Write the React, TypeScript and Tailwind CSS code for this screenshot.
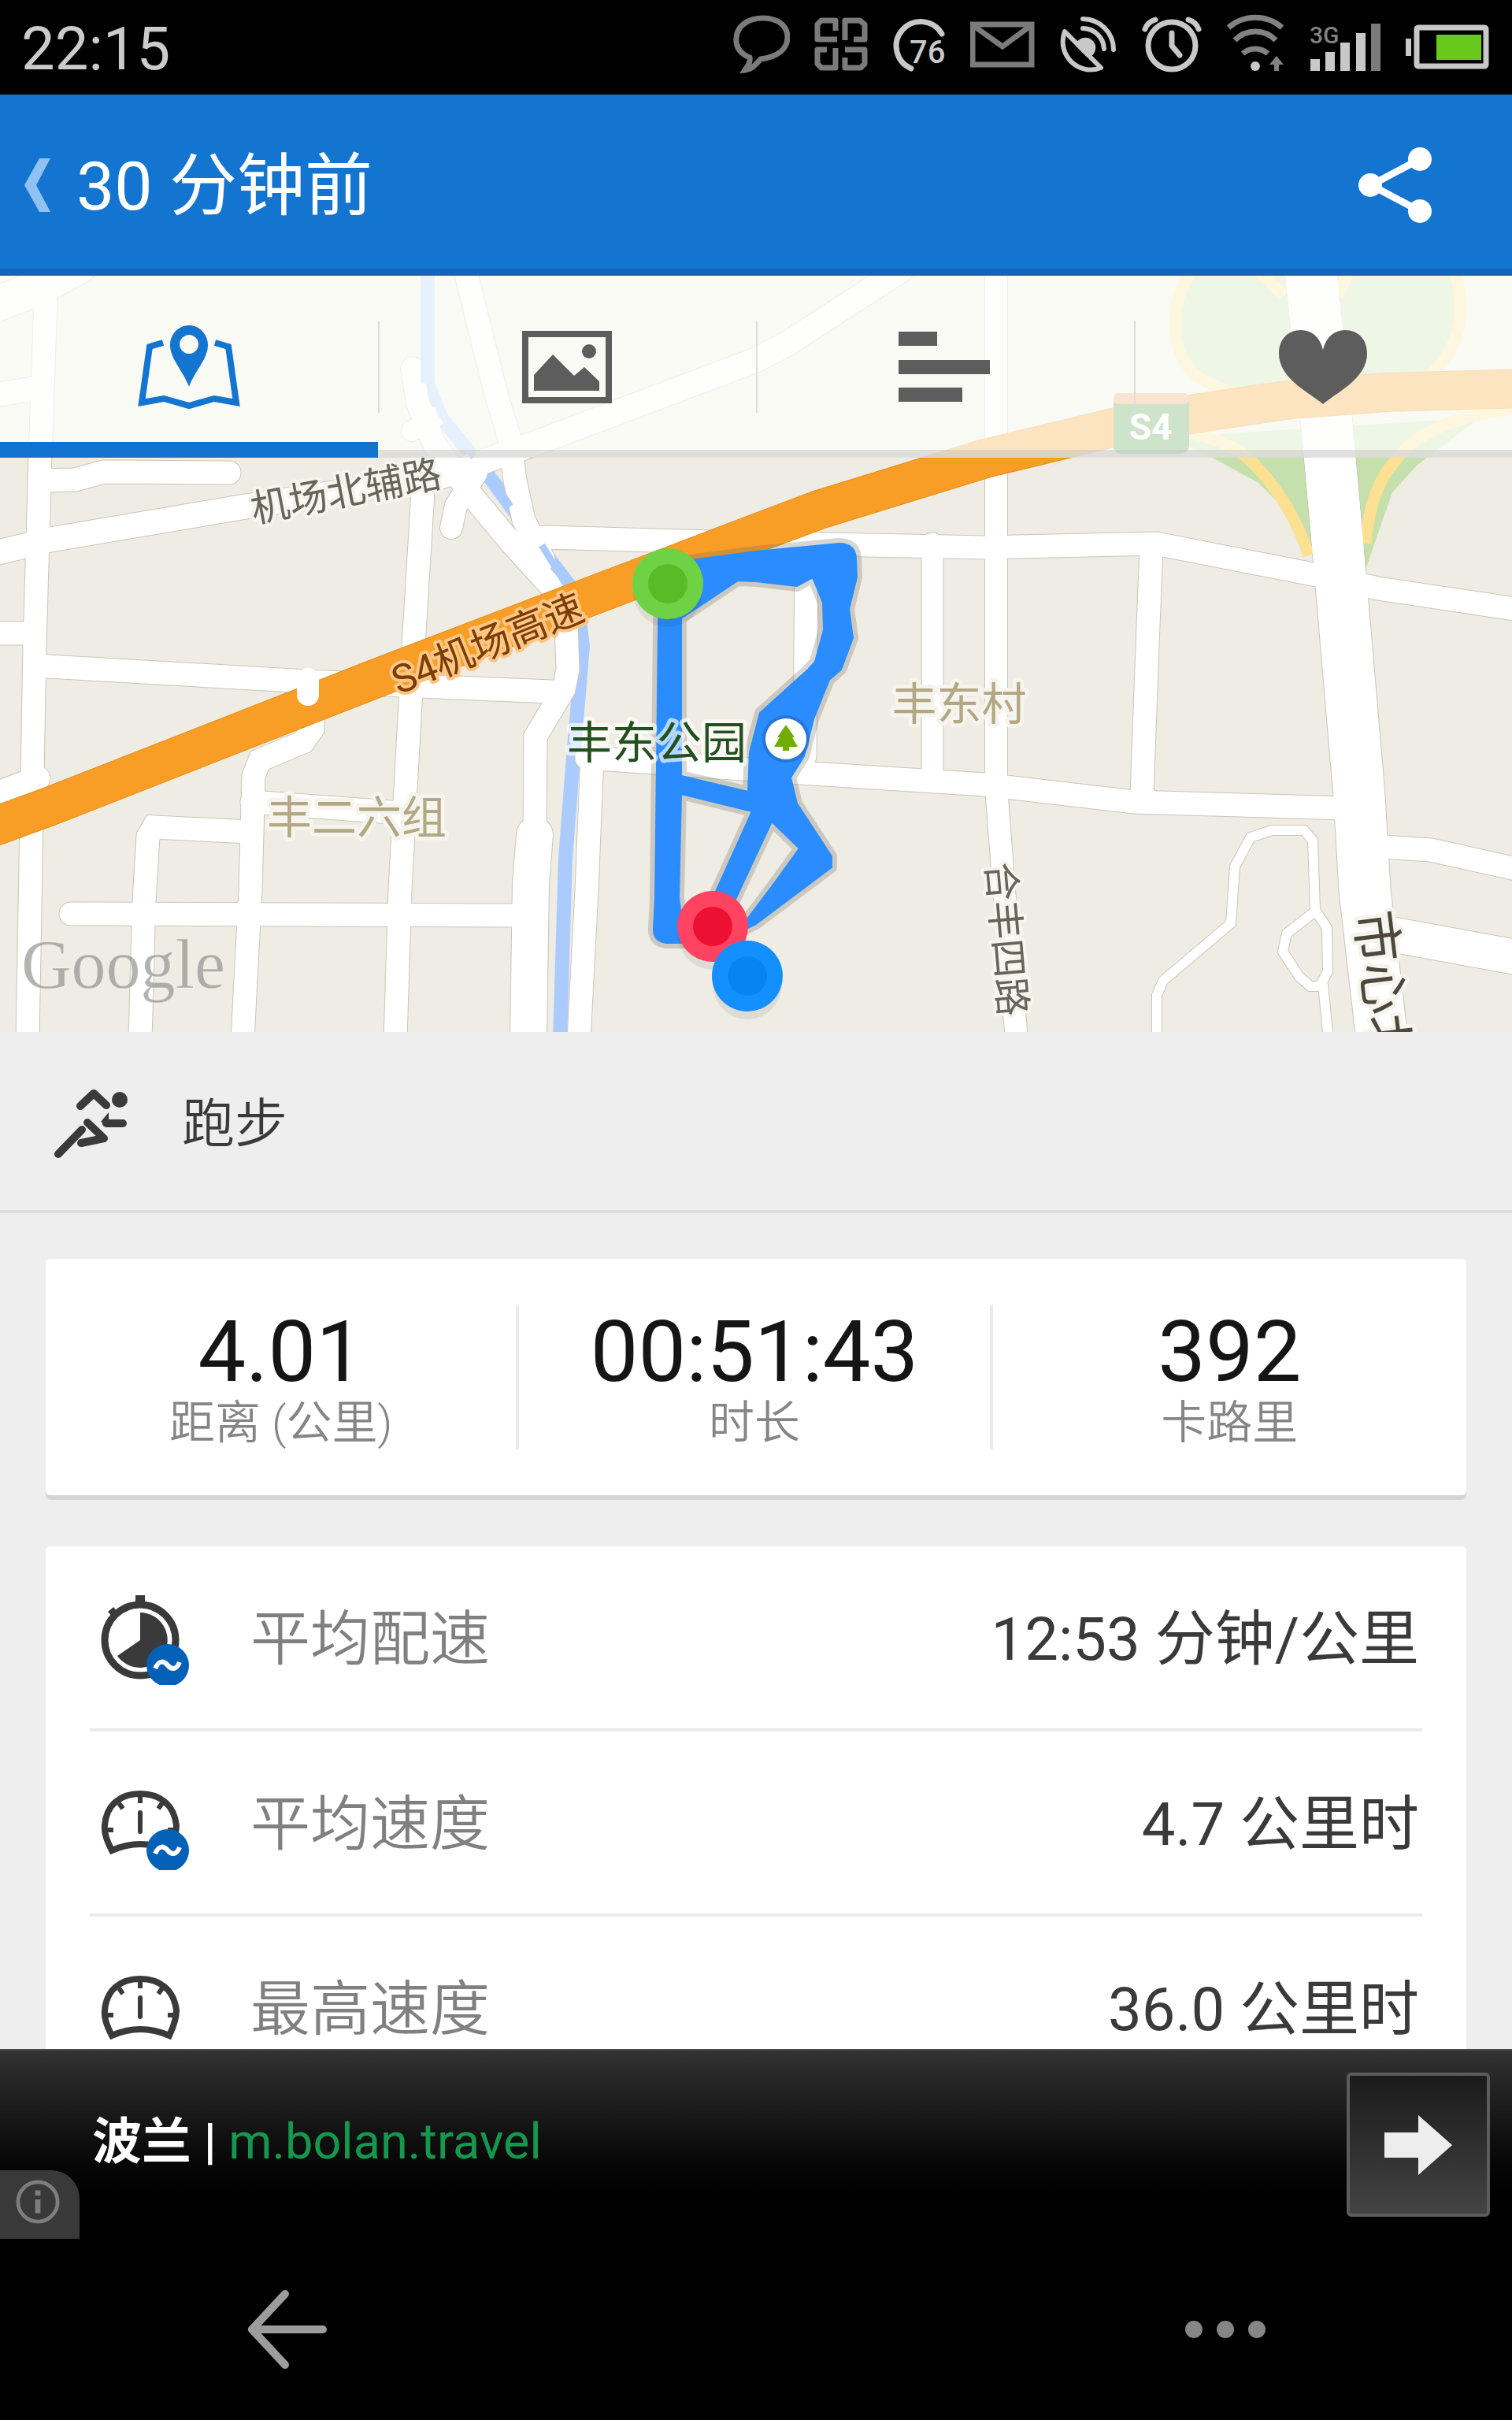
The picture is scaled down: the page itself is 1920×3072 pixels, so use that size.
import type { ReactNode } from 'react';

interface Road {
    d: string;
    w: number;
}

const ROADS: Road[] = [
    { d: 'M-10 388 L50 365 L100 338', w: 44 },
    { d: 'M58 380 L51 580 L44 820 L35 1320', w: 29 },
    { d: 'M-10 502 L52 492', w: 30 },
    { d: 'M51 610 L95 609 L132 599 L291 600', w: 29 },
    { d: 'M-10 703 L64 685 L312 643 L560 605 L660 570 L960 457 L1000 436 L1130 352 L1150 338', w: 31 },
    { d: 'M590 340 L630 500 L648 560 L654 610 L665 660 L690 710', w: 29 },
    { d: 'M524 468 L530 510 L552 565 L600 630 L650 690 L700 745 L719 790 L721 850 L716 875 L680 935 L679 1065', w: 29 },
    { d: 'M552 530 L523 547', w: 26 },
    { d: 'M573 670 L579 642 L605 600', w: 28 },
    { d: 'M690 682 L900 688 L1251 695 L1468 690 L1667 729 L1750 747 L1930 774', w: 29 },
    { d: 'M537 625 L525 820 L508 1130 L502 1320', w: 29 },
    { d: 'M44 845 L390 865 L700 878', w: 29 },
    { d: 'M-10 804 L40 804', w: 29 },
    { d: 'M-10 1010 L48 988', w: 31 },
    { d: 'M398 890 L397 925 L385 942 L330 965 L322 985 L318 1130 L308 1320', w: 29 },
    { d: 'M318 1056 L195 1050 L188 1062 L183 1143 L178 1320', w: 29 },
    { d: 'M320 1018 L510 1032', w: 29 },
    { d: 'M90 1160 L665 1162', w: 29 },
    { d: 'M679 1060 L674 1120 L671 1320', w: 46 },
    { d: 'M752 960 L745 1130 L735 1320', w: 29 },
    { d: 'M745 962 L1000 980 L1251 996 L1440 1018 L1710 1026', w: 29 },
    { d: 'M1265 340 L1265 1000 L1275 1130 L1291 1320', w: 28 },
    { d: 'M1184 690 L1184 985', w: 27 },
    { d: 'M1462 695 L1457 820 L1450 1010', w: 29 },
    { d: 'M1024 690 L1022 960', w: 29 },
    { d: 'M1664 340 L1685 540 L1700 707 L1726 1010 L1733 1130 L1755 1320', w: 65 },
    { d: 'M1740 1074 L1817 1079 L1930 1104', w: 29 },
    { d: 'M1750 1183 L1930 1216', w: 44 },
    { d: 'M1469 1320 L1469 1263 L1477 1245 L1563 1172 L1568 1100 L1588 1063 L1615 1054 L1656 1054 L1667 1067 L1670 1155 L1685 1178 L1686 1233 L1676 1252 L1664 1252 L1650 1240 L1629 1208 L1634 1185 L1670 1157', w: 12 },
    { d: 'M1680 1250 L1687 1320', w: 12 },
];

const HIGHWAY = 'M-20 1054 L62 1024 L478 861 L808 735 L960 677 L1040 647 L1251 582 L1413 543 L1511 526 L1640 507 L1760 498 L1940 493';

const TRACK =
    'M837 715 L870 712 L960 700 L1065 690 Q1087 690 1087 710 L1088 733 L1078 773 L1083 810 L1068 850 L1053 863 L1033 913 L1021 960 L1004 987 L1012 1020 L1056 1087 L1056 1101 L960 1173 L935 1185 L984 1120 L1015 1077 L980 1043 L930 1150 L903 1145 L955 1030 L865 1008 L862 1140 L870 1197 L846 1197 Q830 1195 830 1180 L832 1140 L837 715 Z M865 785 L865 985 L950 1005 L952 955 L965 905 L1026 850 L1035 840 L1046 800 L1045 765 L1032 733 L1012 744 L960 738 L937 737 Z';

const STATS = [
    { value: '4.01', label: '距离 (公里)' },
    { value: '00:51:43', label: '时长' },
    { value: '392', label: '卡路里' },
];

const Marker = ({ x, y, outer, inner }: { x: number; y: number; outer: string; inner: string }) => (
    <g>
        <ellipse cx={x} cy={y + 10} rx={44} ry={45} fill="#000" opacity={0.07} />
        <circle cx={x} cy={y} r={45} fill={outer} />
        <circle cx={x} cy={y} r={25} fill={inner} />
    </g>
);

const RouteMap = () => (
    <svg
        viewBox="0 350 1920 960"
        preserveAspectRatio="xMidYMid slice"
        className="block w-full h-[960px] bg-[#efece3] font-['Roboto','Noto_Sans_CJK_SC',sans-serif]"
        role="img"
        aria-label="路线地图"
    >
        <path d="M1510 340 C1478 400 1485 450 1520 480 L1580 505 L1790 490 C1850 455 1870 400 1845 340 Z" fill="#c5e0ac" />
        <path d="M1330 595 L1400 560 L1880 530 L1800 590 L1768 625 L1735 720 L1672 710 L1640 655 L1598 613 L1538 580 L1480 555 L1395 560 Z" fill="#c5e0ac" />
        <path d="M543 340 L543 487 L560 530 L625 610 L690 700 L732 755 L740 820 L735 880 L728 960 L718 1090 L711 1320" fill="none" stroke="#abcbff" strokeWidth={18} />

        <g fill="none" stroke="#c9c5b8" strokeLinecap="round">
            {ROADS.map((r) => (
                <path key={r.d} d={r.d} strokeWidth={r.w + 2} />
            ))}
        </g>
        <g fill="none" stroke="#fff" strokeLinecap="round">
            {ROADS.map((r) => (
                <path key={r.d} d={r.d} strokeWidth={r.w} />
            ))}
        </g>
        <path d="M543 340 L543 487" fill="none" stroke="#abcbff" strokeWidth={17} />
        <path d="M545 484 L560 525 L602 580 M621 602 L648 643 M688 692 L725 752" fill="none" stroke="#abcbff" strokeWidth={9} />

        {/* interchange ramps */}
        <g fill="none" stroke="#fee092" strokeWidth={15}>
            <path d="M1515 340 C1482 390 1485 450 1522 480 L1590 510" />
            <path d="M1847 340 C1864 400 1855 450 1800 490" />
            <path d="M1595 340 L1630 375" />
            <path d="M1715 340 L1698 375" />
            <path d="M1505 548 Q1570 560 1598 595 Q1640 640 1662 705" />
            <path d="M1734 690 Q1740 620 1770 587 Q1810 530 1930 518" />
        </g>
        <path d="M1664 340 L1685 540 L1700 707" fill="none" stroke="#fff" strokeWidth={65} />

        <path d={HIGHWAY} fill="none" stroke="#e58f1c" strokeWidth={50} strokeLinejoin="round" />
        <path d={HIGHWAY} fill="none" stroke="#f89e26" strokeWidth={48} strokeLinejoin="round" />
        <path d="M391 862 L391 882" stroke="#fff" strokeWidth={28} strokeLinecap="round" />

        {/* recorded track */}
        <path d={TRACK} fill="none" stroke="#6b6b60" strokeOpacity={0.28} strokeWidth={14} strokeLinejoin="round" />
        <path d={TRACK} fill="#2a8cff" fillRule="evenodd" stroke="#2a8cff" strokeWidth={2} strokeLinejoin="round" />

        <rect x={1414} y={499} width={96} height={77} rx={10} fill="#529e48" />
        <rect x={1414} y={499} width={96} height={14} rx={6} fill="#ee9f62" />
        <text x={1461} y={558} fontSize={46} fontWeight={700} fill="#fff" textAnchor="middle">S4</text>

        <g strokeLinejoin="round" style={{ paintOrder: 'stroke' }} textAnchor="middle">
            <g fontSize={49} fill="#69645a" stroke="#f6f4ee" strokeWidth={8}>
                <text x={439} y={641} transform="rotate(-11 439 622)">机场北辅路</text>
                <text x={1279} y={1210} transform="rotate(85 1279 1192)">合丰四路</text>
            </g>
            <text x={619} y={835} fontSize={50} fill="#7a3e06" stroke="#fdc684" strokeWidth={8} transform="rotate(-22 619 817)">S4机场高速</text>
            <text x={834} y={963} fontSize={57} fill="#22501f" stroke="#fff" strokeOpacity={0.65} strokeWidth={10}>丰东公园</text>
            <g fontSize={57} fill="#b3a883" stroke="#f6f4ee" strokeWidth={10}>
                <text x={453} y={1058}>丰二六组</text>
                <text x={1218} y={914}>丰东村</text>
            </g>
            <text x={1741} y={1184} fontSize={66} fill="#4d483b" stroke="#f6f4ee" strokeWidth={10} textAnchor="start" transform="rotate(83 1745 1160)">市心北</text>
        </g>

        <circle cx={998} cy={938} r={30} fill="#1f5fae" opacity={0.5} />
        <circle cx={998} cy={938} r={26} fill="#fff" />
        <path d="M998 920 L1009 936 H1006 L1013 948 H1002 V953 H994 V948 H983 L990 936 H987 Z" fill="#6fae00" />

        <Marker x={848} y={741} outer="#6fd244" inner="#58bb27" />
        <Marker x={905} y={1176} outer="#ff4361" inner="#ee1033" />
        <Marker x={949} y={1239} outer="#148fff" inner="#0784f3" />

        <text x={27} y={1254} fontSize={88} fill="#8b8b88" fillOpacity={0.65} stroke="#fff" strokeOpacity={0.4} strokeWidth={1} className="font-['Liberation_Serif',serif]">Google</text>
    </svg>
);

const StatusBar = () => (
    <div className="flex shrink-0 h-[120px] items-center justify-between bg-black pl-[27px] pr-7 text-[#cbcbcb]">
        <span className="pt-1 text-[76px] leading-none">22:15</span>
        <div className="flex items-center gap-[31px] pb-2">
            <svg viewBox="931 15 72 80" className="w-[72px] h-20" fill="none" stroke="#7b7b7b" strokeWidth={7}>
                <path d="M952 72 C938 66 934 57 935 47 C936 31 951 22 969 22 C988 22 1000 32 1000 46 C1000 61 988 71 966 74 C960 80 956 87 946 88 C950 82 953 78 952 72 Z" />
            </svg>
            <svg viewBox="1032 15 68 80" className="w-[68px] h-20" fill="none" stroke="#7b7b7b" strokeWidth={7} strokeLinejoin="round">
                <path d="M1059 38 V25 H1041 L1036 30 V49 H1061 M1071 50 V25 H1090 L1096 30 V49 H1082 M1048 62 H1036 V80 L1041 85 H1059 V60 M1071 62 H1096 V80 L1091 85 H1071 V72" />
            </svg>
            <svg viewBox="1134 15 68 80" className="w-[68px] h-20 overflow-visible" fill="none" stroke="#c8c8c8" strokeWidth={7} strokeLinecap="round">
                <path d="M1197 42 A31 31 0 1 0 1158 86" />
                <text x={1156} y={79} fontSize={40} fontWeight={500} fill="#c8c8c8" stroke="none">76</text>
            </svg>
            <svg viewBox="1236 15 82 80" className="w-[82px] h-20" fill="none" stroke="#7b7b7b" strokeWidth={7}>
                <rect x={1239} y={30} width={75} height={51} />
                <path d="M1242 33 L1277 58 L1311 33" />
            </svg>
            <svg viewBox="1350 15 74 80" className="w-[74px] h-20" fill="none" stroke="#c8c8c8" strokeWidth={6} strokeLinecap="round" strokeLinejoin="round">
                <path d="M1357 39 L1403 85 C1376 96 1346 70 1357 39 Z M1380 35 A27 27 0 0 1 1407 61 M1380 23 A39 39 0 0 1 1419 62" />
                <path d="M1374 56 A10 10 0 1 1 1387 69 Z" fill="#c8c8c8" />
            </svg>
            <svg viewBox="1453 15 76 80" className="w-[76px] h-20" fill="none" stroke="#c8c8c8" strokeWidth={7} strokeLinecap="round">
                <circle cx={1491} cy={57} r={30} />
                <path d="M1491 41 V57 L1501 69 M1457 36 Q1460 27 1470 24 M1525 36 Q1522 27 1512 24" />
            </svg>
            <svg viewBox="1558 15 76 80" className="w-[76px] h-20" fill="none" stroke="#828282" strokeWidth={7}>
                <path d="M1561 34 A52 52 0 0 1 1629 34 M1569 50 A36 36 0 0 1 1621 50 M1579 67 A24 24 0 0 1 1611 67" />
                <circle cx={1595} cy={83} r={6} fill="#c8c8c8" stroke="none" />
                <path d="M1622 70 L1631 81 H1625 V89 H1619 V81 H1613 Z" fill="#828282" stroke="none" />
            </svg>
            <svg viewBox="1668 15 90 80" className="w-[90px] h-20" fill="#c8c8c8">
                <text x={1667} y={54} fontSize={30} fontWeight={500} fill="#828282">3G</text>
                <path d="M1668 74 h12 v15 h-12 Z M1687 65 h12 v24 h-12 Z M1706 53 h12 v36 h-12 Z M1726 41 h12 v48 h-12 Z" />
                <path d="M1745 29 h12 v60 h-12 Z" fill="#7b7b7b" />
            </svg>
            <svg viewBox="1785 15 107 80" className="w-[107px] h-20">
                <rect x={1799} y={34} width={88} height={49} rx={2} fill="none" stroke="#c8c8c8" strokeWidth={7} />
                <rect x={1785} y={48} width={7} height={22} fill="#c8c8c8" />
                <rect x={1824} y={43} width={57} height={32} fill="#68c91b" />
            </svg>
        </div>
    </div>
);

const Header = () => (
    <header className="flex shrink-0 h-[230px] items-center justify-between bg-[#1475d1] shadow-[inset_0_-9px_0_#1365ba] pl-[31px] pr-[101px]">
        <button className="flex items-center gap-8" aria-label="返回">
            <svg viewBox="0 0 34 68" className="w-[34px] h-[68px]" fill="#8fc1f2">
                <path d="M19 0 H33 L15 34 L33 68 H19 L0 34 Z" />
            </svg>
            <span className="pt-1 text-[86px] leading-none text-white">30 分钟前</span>
        </button>
        <button aria-label="分享">
            <svg viewBox="0 0 94 96" className="w-[94px] h-24" fill="#fff" stroke="#fff" strokeWidth={9}>
                <path d="M78 15 L16 48 L78 81" fill="none" />
                <g stroke="none">
                    <circle cx={78} cy={15} r={15} />
                    <circle cx={15} cy={48} r={15} />
                    <circle cx={78} cy={81} r={15} />
                </g>
            </svg>
        </button>
    </header>
);

const TabButton = ({ label, active, last, children }: { label: string; active?: boolean; last?: boolean; children: ReactNode }) => (
    <button
        role="tab"
        aria-label={label}
        aria-selected={!!active}
        className={`flex h-[231px] items-center ${active ? 'border-b-[20px] border-[#1172d0]' : 'border-b-[10px] border-[#dcdcd9]/85'}`}
    >
        <span className={`flex w-full h-[117px] items-center justify-center ${active ? 'mt-5' : 'mt-[10px]'} ${last ? '' : 'shadow-[2px_0_0_#dededb]'}`}>
            {children}
        </span>
    </button>
);

const Tabs = () => (
    <div role="tablist" className="absolute inset-x-0 top-0 grid grid-cols-4">
        <div className="absolute inset-x-0 top-0 bottom-[10px] bg-[#fdfffc]/72" />
        <div className="contents [&>button]:relative">
            <TabButton label="地图" active>
                <svg viewBox="0 0 130 110" className="w-[130px] h-[110px]" fill="#1475d1">
                    <path fillRule="evenodd" d="M65 2 C78 2 89 13 89 27 C89 45 72 60 65 80 C58 60 41 45 41 27 C41 13 52 2 65 2 Z M65 14 a12 12 0 1 0 0.1 0 Z" />
                    <path d="M32 24 L15 29 L5 100 L33 95 L65 104 L97 95 L125 100 L115 29 L98 24" fill="none" stroke="#1475d1" strokeWidth={8} />
                </svg>
            </TabButton>
            <TabButton label="照片">
                <svg viewBox="0 0 114 92" className="w-[114px] h-[92px]" fill="#5d5d5d">
                    <rect x={4} y={4} width={106} height={84} fill="none" stroke="#5d5d5d" strokeWidth={8} />
                    <path d="M15 76 V56 L39 30 L66 57 L79 46 L98 64 V76 Z" />
                    <circle cx={85} cy={26} r={9} />
                </svg>
            </TabButton>
            <TabButton label="圈速">
                <svg viewBox="0 0 118 92" className="w-[118px] h-[92px]" fill="#5d5d5d">
                    <path d="M0 1 h49 v18 H0 Z M0 37 h116 v18 H0 Z M0 72 h81 v18 H0 Z" />
                </svg>
            </TabButton>
            <TabButton label="心率" last>
                <svg viewBox="0 0 112 94" className="w-28 h-[94px]" fill="#5d5d5d">
                    <path d="M56 94 C40 80 0 62 0 30 C0 11 12 0 28 0 C42 0 52 9 56 25 C60 9 70 0 84 0 C100 0 112 11 112 30 C112 62 72 80 56 94 Z" />
                </svg>
            </TabButton>
        </div>
    </div>
);

const AverageBadge = () => (
    <g>
        <circle cx={99} cy={95} r={27} fill="#0561b7" />
        <path d="M83 99 C88 88 94 89 99 95 C104 101 110 101 114 91" fill="none" stroke="#fff" strokeWidth={6} />
    </g>
);

const StopwatchIcon = () => (
    <svg viewBox="0 0 128 120" className="w-32 h-[120px]" fill="#3a3a3a">
        <circle cx={64} cy={63} r={45} fill="none" stroke="#3a3a3a" strokeWidth={9} />
        <path d="M58 6 h12 v12 h-12 Z M23 27 l7 -6 l8 9 l-7 6 Z" />
        <path d="M64 63 V28 A35 35 0 1 1 35 83 Z" />
        <AverageBadge />
    </svg>
);

const GaugeIcon = ({ average }: { average?: boolean }) => (
    <svg viewBox="0 0 128 120" className="w-32 h-[120px]" fill="none" stroke="#3a3a3a">
        <path d="M28 95 C20 80 18 71 19 63 C21 37 39 23 64 23 C89 23 107 37 110 63 C110 71 108 80 101 95 Q64 79 28 95 Z" strokeWidth={8} />
        <path d="M64 27 V35 M37 35 L42 42 M92 35 L87 42 M21 69 H30 M108 69 H99" strokeWidth={6} />
        <path d="M64 47 V71" strokeWidth={6} strokeLinecap="round" />
        {average && <g stroke="none"><AverageBadge /></g>}
    </svg>
);

const DETAILS = [
    { label: '平均配速', value: '12:53 分钟/公里', icon: <StopwatchIcon /> },
    { label: '平均速度', value: '4.7 公里时', icon: <GaugeIcon average /> },
    { label: '最高速度', value: '36.0 公里时', icon: <GaugeIcon /> },
];

const Activity = () => (
    <div className="flex h-[230px] items-center gap-[51px] border-b-4 border-[#dcdcdc] pl-[60px]">
        <svg viewBox="60 1363 120 120" className="w-[120px] h-[120px]" fill="none" stroke="#3a3a3a" strokeWidth={10} strokeLinecap="round" strokeLinejoin="round">
            <circle cx={152} cy={1396} r={10} fill="#3a3a3a" stroke="none" />
            <path d="M102 1404 L119 1388 L135 1403 M111 1425 L132 1445 L103 1451 M104 1434 L74 1465 M135 1426 H156" />
            <path d="M138 1412 L128 1424 L138 1430 Z" fill="#3a3a3a" stroke="none" />
        </svg>
        <h2 className="pt-2 text-[67px] leading-none text-[#3a3a3a] font-[350]">跑步</h2>
    </div>
);

const StatsCard = () => (
    <dl className="mt-[58px] mx-[58px] grid grid-cols-3 rounded-md bg-white py-[58px] shadow-[0_6px_0_#d6d6d6]">
        {STATS.map((s) => (
            <div key={s.label} className="flex h-[184px] flex-col-reverse justify-end items-center border-r-4 border-[#ebebeb] last:border-r-0">
                <dt className="text-[58px] leading-[60px] text-[#858585] font-[350]">{s.label}</dt>
                <dd className="text-[108px] leading-[120px] text-[#151515]">{s.value}</dd>
            </div>
        ))}
    </dl>
);

const DetailsCard = () => (
    <dl className="mt-[65px] mx-[58px] rounded-md bg-white px-14">
        {DETAILS.map((row) => (
            <div key={row.label} className="flex h-[235px] items-center justify-between border-b-4 border-[#ebebeb]">
                <dt className="flex items-center gap-[76px] text-[76px] leading-none text-[#808080] font-[350]">
                    {row.icon}
                    <span className="pt-1">{row.label}</span>
                </dt>
                <dd className="pt-1 pr-1 text-[76px] leading-none text-[#3a3a3a]">{row.value}</dd>
            </div>
        ))}
    </dl>
);

const AdBanner = () => (
    <aside className="relative flex shrink-0 h-[241px] items-center justify-between border-t-2 border-[#4a4a4a] bg-gradient-to-b from-[#333] to-black pl-[117px] pr-7">
        <p className="pb-2 text-[63px] leading-none text-white">
            <b>波兰 | </b>
            <a href="#ad" className="text-[#15984d]">m.bolan.travel</a>
        </p>
        <button aria-label="打开" className="flex w-[182px] h-[183px] items-center justify-center rounded-md border-4 border-[#5c5c5c] bg-gradient-to-b from-[#1b1b1b] to-[#444]">
            <svg viewBox="0 0 86 76" className="w-[86px] h-[76px]" fill="#ededed">
                <path d="M0 22 H43 V0 L86 38 L43 76 V54 H0 Z" />
            </svg>
        </button>
        <button aria-label="广告信息" className="absolute left-0 bottom-0 flex w-[101px] h-[87px] items-center pl-[19px] rounded-tr-[36px] bg-[#393939]">
            <svg viewBox="0 0 60 60" className="w-[58px] h-[58px] mb-2" fill="none" stroke="#7d7d7d" strokeWidth={5}>
                <circle cx={30} cy={30} r={26} />
                <path d="M30 27 V45 M30 15 V22" strokeWidth={7} />
            </svg>
        </button>
    </aside>
);

const NavBar = () => (
    <nav className="flex shrink-0 h-[230px] items-center justify-between bg-black px-[312px]">
        <button aria-label="返回">
            <svg viewBox="0 0 104 100" className="w-[104px] h-[100px]" fill="none" stroke="#9c9c9c" strokeWidth={10} strokeLinecap="round" strokeLinejoin="round">
                <path d="M50 5 L8 50 L50 95 M8 50 H98" />
            </svg>
        </button>
        <button aria-label="更多">
            <svg viewBox="0 0 104 24" className="w-[104px] h-6" fill="#868686">
                <circle cx={12} cy={12} r={11} />
                <circle cx={52} cy={12} r={11} />
                <circle cx={92} cy={12} r={11} />
            </svg>
        </button>
    </nav>
);

export default function App() {
    return (
        <div className="flex h-screen flex-col bg-[#eee] font-['Roboto','Noto_Sans_CJK_SC',sans-serif]">
            <StatusBar />
            <Header />
            <main className="flex-1 min-h-0 overflow-hidden">
                <section className="relative">
                    <RouteMap />
                    <Tabs />
                </section>
                <Activity />
                <StatsCard />
                <DetailsCard />
            </main>
            <AdBanner />
            <NavBar />
        </div>
    );
}
